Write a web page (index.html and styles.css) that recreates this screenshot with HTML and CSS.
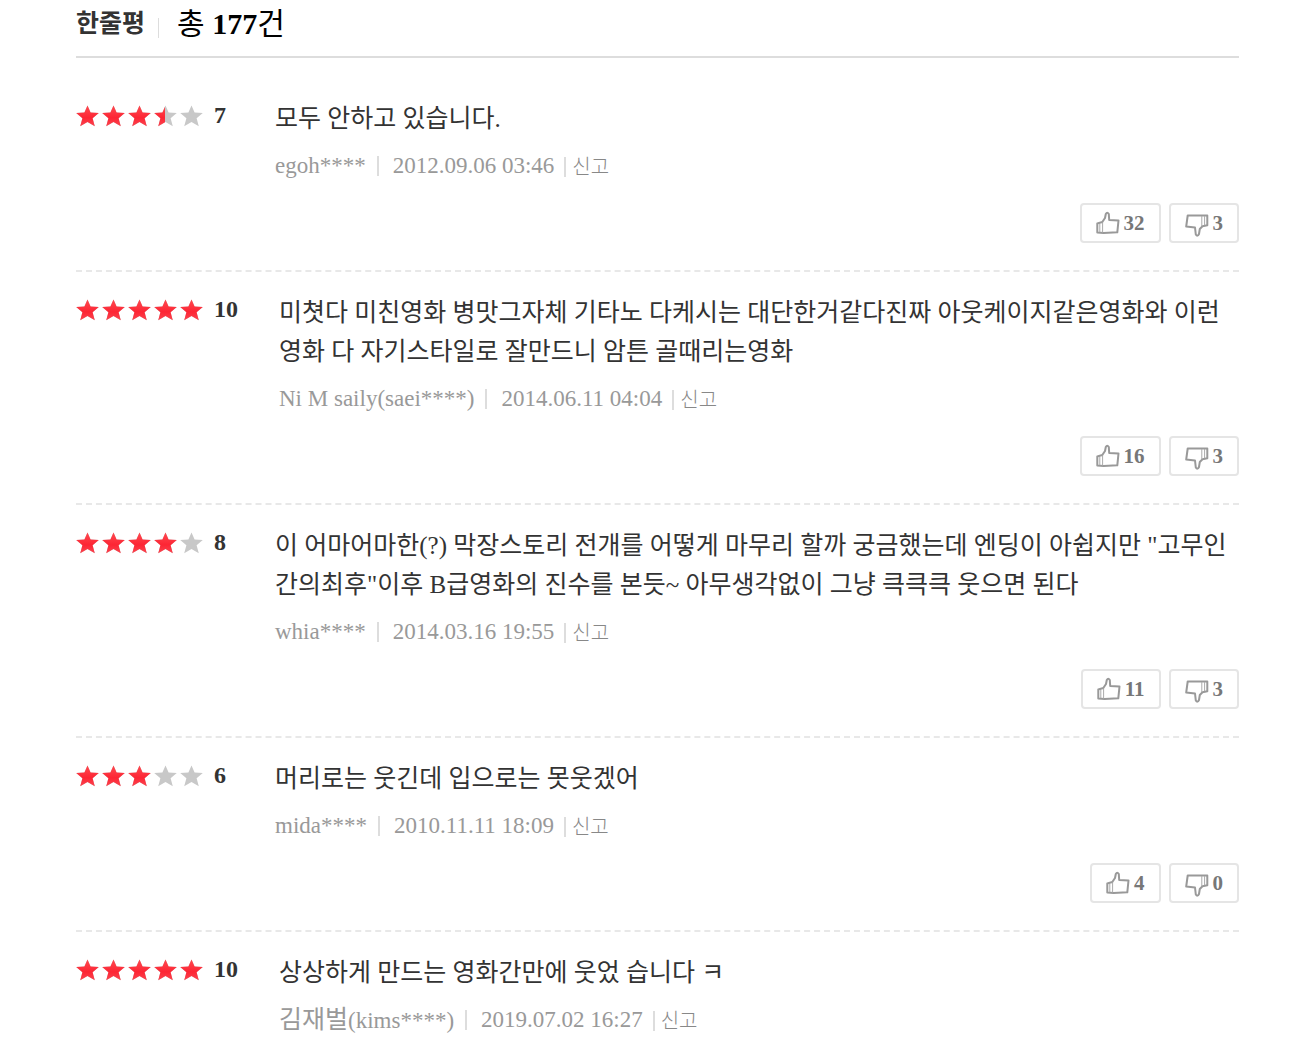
FILE: index.html
```html
<!DOCTYPE html>
<html lang="ko">
<head>
    <meta charset="UTF-8">
    <meta name="viewport" content="width=device-width, initial-scale=1.0">
    <title>한줄평</title>
    <link rel="stylesheet" href="styles.css">
</head>
<body>
    <!-- 아이콘 정의 -->
    <svg class="defs" width="0" height="0" aria-hidden="true">
        <defs>
            <linearGradient id="red" x1="0" y1="0" x2="0" y2="1">
                <stop offset="0" stop-color="#ff4a50"/>
                <stop offset="0.6" stop-color="#fd2534"/>
                <stop offset="1" stop-color="#fb4550"/>
            </linearGradient>
            <path id="star" d="M11.5 0.5 L14.6 7.6 L22.8 8.1 L16.6 13.3 L18.8 21.2 L11.5 17 L4.2 21.2 L6.4 13.3 L0.2 8.1 L8.4 7.6 Z"/>
            <g id="stars">
                <use href="#star" x="0"/>
                <use href="#star" x="26"/>
                <use href="#star" x="52"/>
                <use href="#star" x="78"/>
                <use href="#star" x="104"/>
            </g>
            <symbol id="up" viewBox="0 0 24 24">
                <path d="M1.3 12.5 L6.3 11 L9 7 L9.8 3 Q11.2 0.6 12.8 3 L13.2 9 L22.5 9.5 L21.3 21.3 L7.5 22 L1.3 21.6 Z"/>
                <path class="thin" d="M3.8 13 V21 M6.6 11.5 V21.5"/>
            </symbol>
            <symbol id="down" viewBox="0 0 24 24">
                <path d="M2.7 2.5 H22.3 V12.2 L17.5 13.2 L14.8 16 L14 21 Q12.5 24 10.8 21.5 L10 14.5 L1.2 13.5 Z"/>
                <path class="thin" d="M16.8 3 V13 M19.6 3 V12"/>
            </symbol>
        </defs>
    </svg>

    <main class="reviews">
        <header class="reviews-header">
            <h1>한줄평</h1>
            <p class="total">총 <strong>177</strong>건</p>
        </header>

        <ul class="review-list">
            <li class="review">
                <div class="rating">
                    <span class="stars">
                        <svg class="stars-off" width="127" height="22"><use href="#stars"/></svg>
                        <span class="stars-on" style="width: 70%"><svg width="127" height="22"><use href="#stars"/></svg></span>
                    </span>
                    <strong class="score">7</strong>
                </div>
                <div class="content">
                    <p class="comment">모두 안하고 있습니다.</p>
                    <div class="meta">
                        <span class="user">egoh****</span>
                        <span class="date">2012.09.06 03:46</span>
                        <a class="report" href="#">신고</a>
                    </div>
                </div>
                <div class="votes">
                    <button type="button" aria-label="공감 32"><svg class="icon"><use href="#up"/></svg>32</button>
                    <button type="button" aria-label="비공감 3"><svg class="icon icon-down"><use href="#down"/></svg>3</button>
                </div>
            </li>

            <li class="review review-ten">
                <div class="rating">
                    <span class="stars">
                        <svg class="stars-off" width="127" height="22"><use href="#stars"/></svg>
                        <span class="stars-on" style="width: 100%"><svg width="127" height="22"><use href="#stars"/></svg></span>
                    </span>
                    <strong class="score">10</strong>
                </div>
                <div class="content">
                    <p class="comment">미쳣다 미친영화 병맛그자체 기타노 다케시는 대단한거같다진짜 아웃케이지같은영화와 이런 영화 다 자기스타일로 잘만드니 암튼 골때리는영화</p>
                    <div class="meta">
                        <span class="user">Ni M saily(saei****)</span>
                        <span class="date">2014.06.11 04:04</span>
                        <a class="report" href="#">신고</a>
                    </div>
                </div>
                <div class="votes">
                    <button type="button" aria-label="공감 16"><svg class="icon"><use href="#up"/></svg>16</button>
                    <button type="button" aria-label="비공감 3"><svg class="icon icon-down"><use href="#down"/></svg>3</button>
                </div>
            </li>

            <li class="review">
                <div class="rating">
                    <span class="stars">
                        <svg class="stars-off" width="127" height="22"><use href="#stars"/></svg>
                        <span class="stars-on" style="width: 80%"><svg width="127" height="22"><use href="#stars"/></svg></span>
                    </span>
                    <strong class="score">8</strong>
                </div>
                <div class="content">
                    <p class="comment">이 어마어마한(?) 막장스토리 전개를 어떻게 마무리 할까 궁금했는데 엔딩이 아쉽지만 "고무인간의최후"이후 B급영화의 진수를 본듯~ 아무생각없이 그냥 큭큭큭 웃으면 된다</p>
                    <div class="meta">
                        <span class="user">whia****</span>
                        <span class="date">2014.03.16 19:55</span>
                        <a class="report" href="#">신고</a>
                    </div>
                </div>
                <div class="votes">
                    <button type="button" aria-label="공감 11"><svg class="icon"><use href="#up"/></svg>11</button>
                    <button type="button" aria-label="비공감 3"><svg class="icon icon-down"><use href="#down"/></svg>3</button>
                </div>
            </li>

            <li class="review">
                <div class="rating">
                    <span class="stars">
                        <svg class="stars-off" width="127" height="22"><use href="#stars"/></svg>
                        <span class="stars-on" style="width: 60%"><svg width="127" height="22"><use href="#stars"/></svg></span>
                    </span>
                    <strong class="score">6</strong>
                </div>
                <div class="content">
                    <p class="comment">머리로는 웃긴데 입으로는 못웃겠어</p>
                    <div class="meta">
                        <span class="user">mida****</span>
                        <span class="date">2010.11.11 18:09</span>
                        <a class="report" href="#">신고</a>
                    </div>
                </div>
                <div class="votes">
                    <button type="button" aria-label="공감 4"><svg class="icon"><use href="#up"/></svg>4</button>
                    <button type="button" aria-label="비공감 0"><svg class="icon icon-down"><use href="#down"/></svg>0</button>
                </div>
            </li>

            <li class="review review-ten">
                <div class="rating">
                    <span class="stars">
                        <svg class="stars-off" width="127" height="22"><use href="#stars"/></svg>
                        <span class="stars-on" style="width: 100%"><svg width="127" height="22"><use href="#stars"/></svg></span>
                    </span>
                    <strong class="score">10</strong>
                </div>
                <div class="content">
                    <p class="comment">상상하게 만드는 영화간만에 웃었 습니다 ㅋ</p>
                    <div class="meta">
                        <span class="user"><span class="nickname">김재벌</span>(kims****)</span>
                        <span class="date">2019.07.02 16:27</span>
                        <a class="report" href="#">신고</a>
                    </div>
                </div>
            </li>
        </ul>
    </main>
</body>
</html>
```
FILE: styles.css
```css
:root {
    --text: #333;
    --muted: #999;
    --line: #ddd;
    --star-off: #c8c8c8;
}

* {
    box-sizing: border-box;
}

body {
    margin: 0;
    background: #fff;
    color: var(--text);
    font-family: "Liberation Serif", "Noto Sans CJK KR", serif;
}

h1,
p,
ul {
    margin: 0;
    padding: 0;
}

.defs {
    display: block;
}

.reviews {
    padding: 0 67px 0 76px;
}

/* 상단 제목 */
.reviews-header {
    display: flex;
    align-items: center;
    height: 58px;
    padding-bottom: 8px;
    border-bottom: 2px solid var(--line);
}

.reviews-header h1 {
    font-size: 25px;
    line-height: 36px;
}

.total {
    color: #000;
    font-size: 30px;
    line-height: 36px;
}

.total::before {
    content: "";
    display: inline-block;
    width: 1px;
    height: 20px;
    margin: 0 18px 0 13px;
    background: var(--line);
    vertical-align: -4px;
}

/* 리뷰 목록 */
.review-list {
    list-style: none;
}

.review {
    display: grid;
    grid-template-columns: 199px 1fr;
    padding: 20px 0 27px;
    border-bottom: 2px dashed #e8e8e8;
}

.review:first-child {
    padding-top: 40px;
}

.review:last-child {
    border-bottom: 0;
}

.review-ten {
    grid-template-columns: 203px 1fr;
}

/* 별점 */
.rating {
    display: flex;
    align-items: center;
    gap: 11px;
    height: 35px;
}

.stars {
    position: relative;
    width: 127px;
    height: 22px;
}

.stars svg {
    display: block;
}

.stars-off {
    fill: var(--star-off);
}

.stars-on {
    position: absolute;
    top: 0;
    left: 0;
    overflow: hidden;
    fill: url(#red);
}

.score {
    font-size: 24px;
    line-height: 35px;
}

/* 본문 */
.content {
    padding-top: 1px;
}

.comment {
    font-size: 25px;
    line-height: 39px;
    word-break: break-all;
}

.meta {
    display: flex;
    align-items: center;
    margin-top: 13px;
    color: var(--muted);
    font-size: 23px;
    line-height: 28px;
}

.nickname {
    font-size: 25px;
}

.date,
.report {
    display: flex;
    align-items: center;
}

.date::before,
.report::before {
    content: "";
    width: 2px;
    height: 20px;
    background: var(--line);
}

.date::before {
    margin: 0 14px 0 11px;
}

.report::before {
    margin: 0 6px 0 10px;
}

.report {
    padding-top: 2px;
    color: #888;
    font-size: 20px;
    font-weight: 300;
    text-decoration: none;
}

/* 공감 버튼 */
.votes {
    grid-column: 1 / -1;
    display: flex;
    justify-content: flex-end;
    gap: 8px;
    margin-top: 22px;
}

.votes button {
    display: flex;
    align-items: center;
    gap: 4px;
    height: 40px;
    padding: 0 14px;
    border: 2px solid #e5e5e5;
    border-radius: 4px;
    background: #fff;
    color: #777;
    font: bold 21px "Liberation Serif", serif;
    cursor: pointer;
}

.icon {
    width: 24px;
    height: 24px;
    fill: none;
    stroke: #999;
    stroke-width: 2;
    stroke-linejoin: round;
}

.thin {
    stroke: #aaa;
    stroke-width: 1;
}

.icon-down {
    margin-top: 4px;
}
```
